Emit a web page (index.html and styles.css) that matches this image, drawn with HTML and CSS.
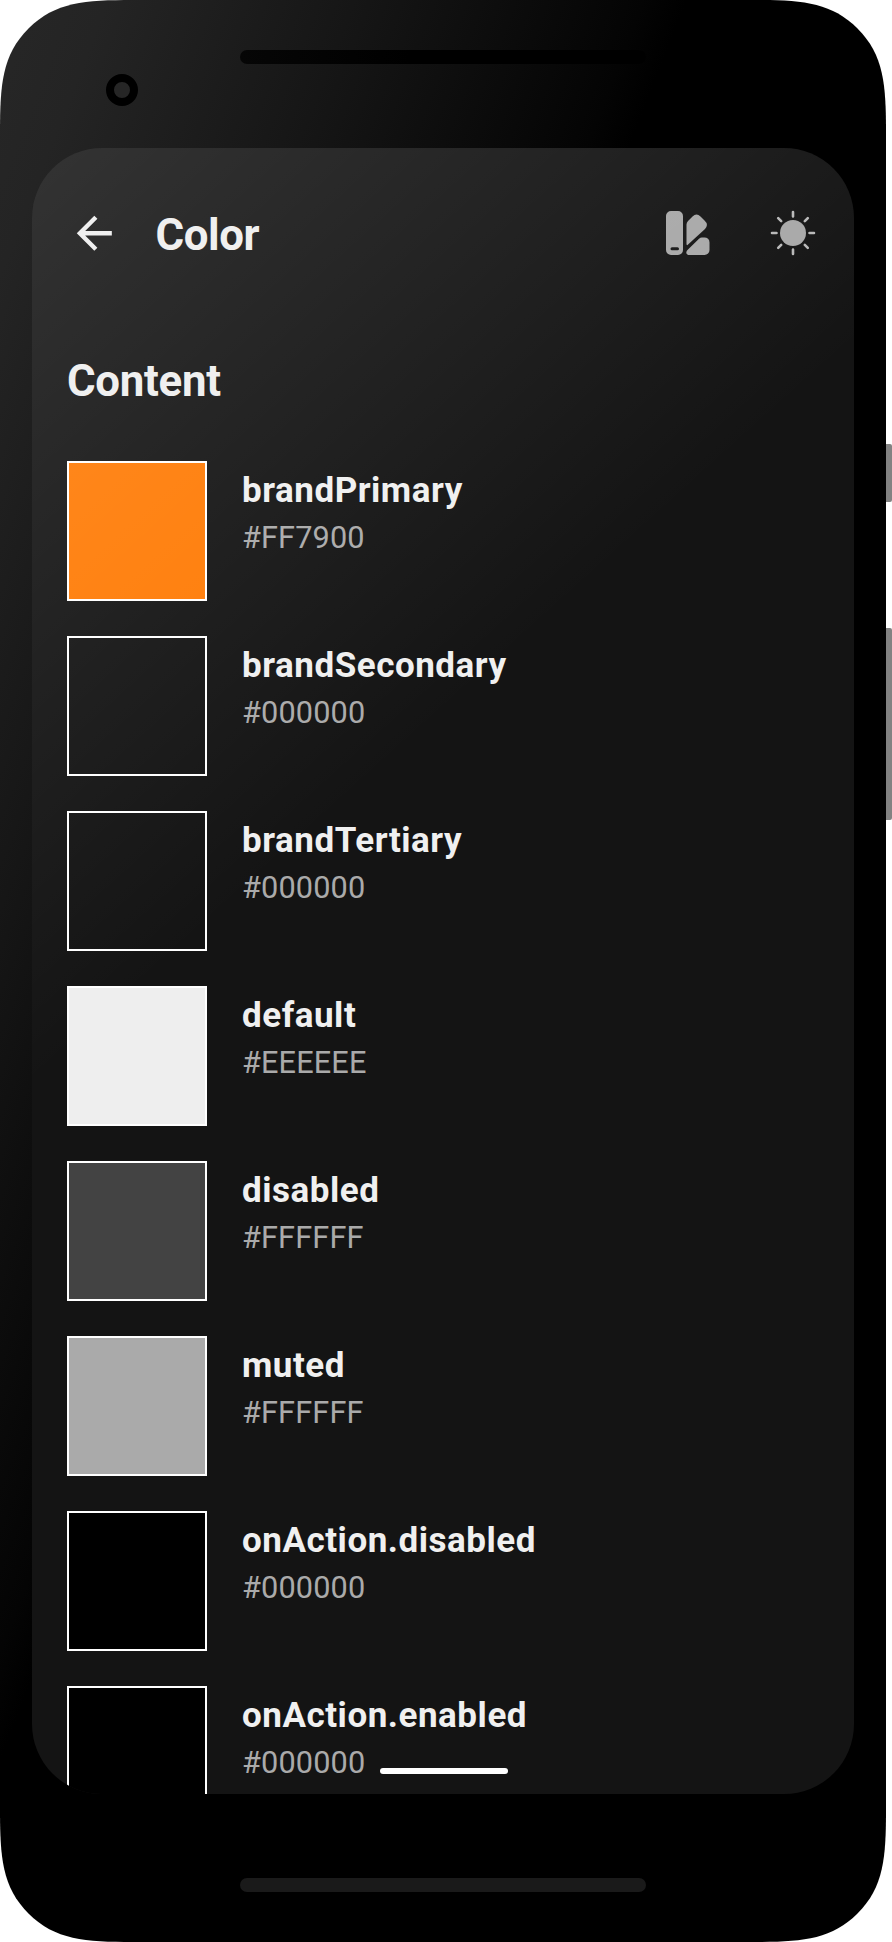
FILE: index.html
```html
<!DOCTYPE html>
<html lang="en">
<head>
<meta charset="utf-8">
<title>Color</title>
<link rel="stylesheet" href="styles.css">
</head>
<body>
<div class="device">
  <div class="phone">
    <div class="bezel-top">
      <span class="camera"></span>
      <span class="speaker"></span>
    </div>
    <main class="screen">
      <header class="appbar">
        <svg class="icon back" viewBox="0 0 24 24"><path d="M20 11H7.830l5.590-5.590L12 4l-8 8 8 8 1.410-1.410L7.830 13H20z"/></svg>
        <h1 class="title">Color</h1>
        <svg class="icon palette" viewBox="0 0 46 46"><path fill-rule="evenodd" d="M6 1h7a5 5 0 0 1 5 5v34a5 5 0 0 1-5 5H6a5 5 0 0 1-5-5V6a5 5 0 0 1 5-5zm1 36.200a1.500 1.500 0 0 0 0 3h5.500a1.500 1.500 0 0 0 0-3z"/><path d="M21.500 34V14.500q0-2 1.500-3.500l4.500-4.500q4-4 8 0l4 4q4.500 4 .5 8.500L22.500 35q-1 .5-1-1z"/><path d="M22.500 40 34 28.700q1.300-1.300 3-1.300h2.500a5 5 0 0 1 5 5V40a5 5 0 0 1-5 5h-15c-3.500 0-4-2.800-2-5z"/></svg>
        <svg class="icon sun" viewBox="0 0 46 46"><circle cx="23" cy="23" r="13"/><path class="rays" d="M23 2v4.500M23 39.500V44M2 23h4.500M39.500 23H44M8.200 8.200l3 3M34.800 34.800l3 3M8.200 37.800l3-3M34.800 11.200l3-3"/></svg>
      </header>
      <h2 class="section">Content</h2>
      <ul class="list">
        <li class="row"><span class="swatch brand"></span><div class="text"><p class="name">brandPrimary</p><p class="hex">#FF7900</p></div></li>
        <li class="row"><span class="swatch"></span><div class="text"><p class="name">brandSecondary</p><p class="hex">#000000</p></div></li>
        <li class="row"><span class="swatch"></span><div class="text"><p class="name">brandTertiary</p><p class="hex">#000000</p></div></li>
        <li class="row"><span class="swatch default"></span><div class="text"><p class="name">default</p><p class="hex">#EEEEEE</p></div></li>
        <li class="row"><span class="swatch disabled"></span><div class="text"><p class="name">disabled</p><p class="hex">#FFFFFF</p></div></li>
        <li class="row"><span class="swatch muted"></span><div class="text"><p class="name">muted</p><p class="hex">#FFFFFF</p></div></li>
        <li class="row"><span class="swatch black"></span><div class="text"><p class="name">onAction.disabled</p><p class="hex">#000000</p></div></li>
        <li class="row"><span class="swatch black"></span><div class="text"><p class="name">onAction.enabled</p><p class="hex">#000000</p></div></li>
      </ul>
      <span class="home"></span>
      <span class="gloss"></span>
    </main>
    <div class="bezel-bottom"><span class="grille"></span></div>
  </div>
  <div class="side"><span class="key power"></span><span class="key volume"></span></div>
</div>
</body>
</html>
```
FILE: styles.css
```css
* { box-sizing: border-box; margin: 0; padding: 0; }
body { background: #fff; font-family: Roboto, sans-serif; }
.device { display: flex; width: 892px; height: 1942px; overflow: hidden; }
.phone {
  display: flex; flex-direction: column; width: 886px; height: 1942px; padding: 0 32px;
  background: linear-gradient(111.3deg, #272727 0, #242424 100px, #161616 330px, #040404 600px, #000 640px);
  clip-path: path("M0 133C0 85 2 55 28.500 28.500C55 2 85 0 133 0H753C801 0 831 2 857.500 28.500C884 55 886 85 886 133V1809C886 1857 884 1887 857.500 1913.500C831 1940 801 1942 753 1942H133C85 1942 55 1940 28.500 1913.500C2 1887 0 1857 0 1809Z");
}
.bezel-top { display: flex; align-items: flex-start; height: 148px; flex: none; padding-left: 74px; }
.camera { width: 32px; height: 32px; margin-top: 74px; border: 8px solid #000; border-radius: 50%; background: #262626; }
.speaker { width: 406px; height: 14px; margin: 50px 0 0 102px; border-radius: 7px; background: linear-gradient(90deg, #060606, #000 170px); }
.screen { position: relative; height: 1646px; flex: none; border-radius: 70px; overflow: hidden; background: #141414; }
.gloss { position: absolute; inset: 0; background: linear-gradient(138deg, rgba(255,255,255,.135) 0, rgba(255,255,255,0) 700px); }
.appbar { display: flex; align-items: center; height: 170px; padding: 0 38px 0 36px; }
.icon { flex: none; fill: #a8a8a8; }
.back { width: 52.600px; height: 52.600px; fill: #eee; }
.title { flex: 1; margin: 4px 0 0 35px; font-size: 43.800px; line-height: 52px; font-weight: 700; letter-spacing: -.450px; color: #eee; }
.palette, .sun { width: 46px; height: 46px; }
.palette { margin-right: 59px; }
.rays { fill: none; stroke: #b8b8b8; stroke-width: 2.600; stroke-linecap: round; }
.section { height: 143px; padding: 37px 0 0 35px; font-size: 43.800px; line-height: 52px; font-weight: 700; letter-spacing: -.300px; color: #eee; }
.list { list-style: none; padding-left: 35px; }
.row { display: flex; gap: 35px; height: 175px; }
.swatch { width: 140px; height: 140px; flex: none; border: 2px solid #fff; }
.brand { background: #ff7b05; }
.default { background: #eee; }
.disabled { background: #434343; }
.muted { background: #aaa; }
.black { background: #000; }
.text { padding-top: 8px; }
.name { font-size: 35px; line-height: 44px; font-weight: 700; letter-spacing: .530px; color: #f0f0f0; white-space: nowrap; }
.hex { margin-top: 5px; font-size: 30.700px; line-height: 40px; letter-spacing: .130px; color: #aaa; }
.home { position: absolute; left: 348px; bottom: 20px; width: 128px; height: 6px; border-radius: 3px; background: #fff; }
.bezel-bottom { display: flex; justify-content: center; padding-top: 84px; }
.grille { width: 406px; height: 14px; border-radius: 7px; background: #1a1a1a; }
.side { width: 6px; padding-top: 444px; }
.key { display: block; background: #828282; border-radius: 0 2px 2px 0; }
.power { height: 58px; }
.volume { height: 192px; margin-top: 126px; }
```
